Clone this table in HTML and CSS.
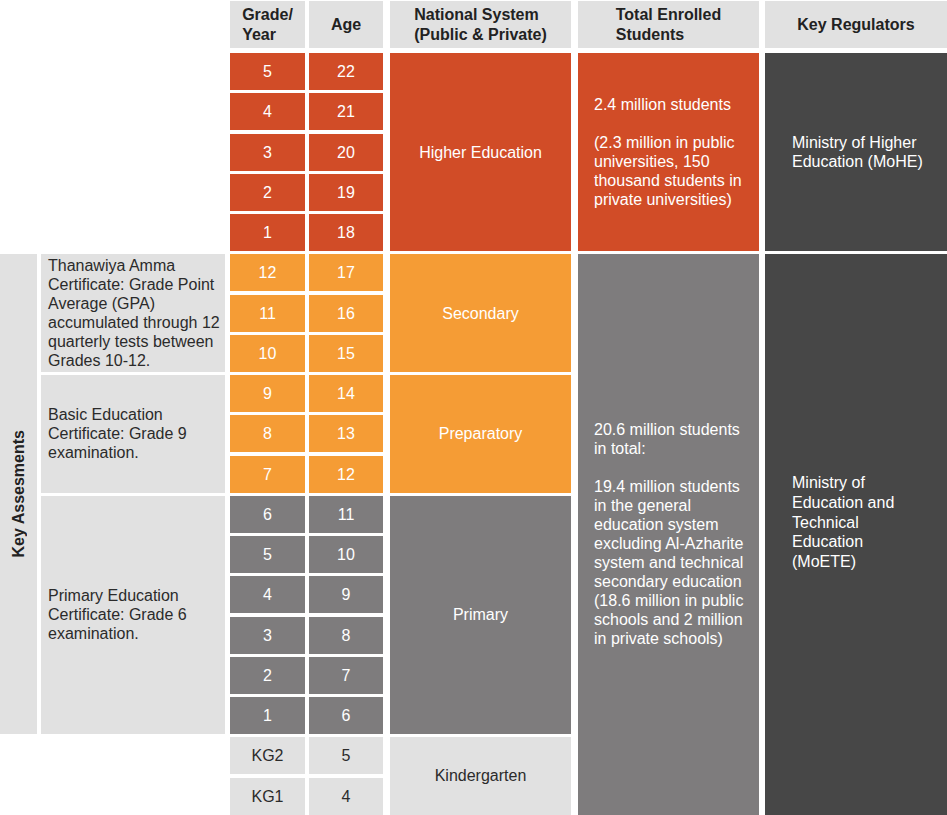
FILE: index.html
```html
<!DOCTYPE html>
<html lang="en">
<head>
<meta charset="utf-8">
<title>Education System</title>
<link rel="stylesheet" href="styles.css">
</head>
<body>
<div class="chart">
  <div class="hd c-grade"><span>Grade/<br>Year</span></div>
  <div class="hd c-age"><span>Age</span></div>
  <div class="hd c-nat"><span>National System<br>(Public &amp; Private)</span></div>
  <div class="hd c-total"><span>Total Enrolled<br>Students</span></div>
  <div class="hd c-key"><span>Key Regulators</span></div>

  <div class="strip"><span>Key Assesments</span></div>
  <div class="assess r-sec">Thanawiya Amma Certificate: Grade Point Average (GPA) accumulated through 12 quarterly tests between Grades 10-12.</div>
  <div class="assess r-prep">Basic Education Certificate: Grade 9 examination.</div>
  <div class="assess r-prim">Primary Education Certificate: Grade 6 examination.</div>

  <div class="nat red r-high">Higher Education</div>
  <div class="nat orange r-sec">Secondary</div>
  <div class="nat orange r-prep">Preparatory</div>
  <div class="nat gray r-prim">Primary</div>
  <div class="nat light r-kg">Kindergarten</div>

  <div class="total red r-high">
    <p>2.4 million students</p>
    <p>(2.3 million in public universities, 150 thousand students in private universities)</p>
  </div>
  <div class="total gray r-school">
    <p>20.6 million students in total:</p>
    <p>19.4 million students in the general education system excluding Al-Azharite system and technical secondary education (18.6 million in public schools and 2 million in private schools)</p>
  </div>

  <div class="key dark r-high"><p>Ministry of Higher Education (MoHE)</p></div>
  <div class="key dark key-school r-school"><p>Ministry of Education and Technical Education (MoETE)</p></div>

  <div class="num g red">5</div><div class="num a red">22</div>
  <div class="num g red">4</div><div class="num a red">21</div>
  <div class="num g red">3</div><div class="num a red">20</div>
  <div class="num g red">2</div><div class="num a red">19</div>
  <div class="num g red">1</div><div class="num a red">18</div>
  <div class="num g orange">12</div><div class="num a orange">17</div>
  <div class="num g orange">11</div><div class="num a orange">16</div>
  <div class="num g orange">10</div><div class="num a orange">15</div>
  <div class="num g orange">9</div><div class="num a orange">14</div>
  <div class="num g orange">8</div><div class="num a orange">13</div>
  <div class="num g orange">7</div><div class="num a orange">12</div>
  <div class="num g gray">6</div><div class="num a gray">11</div>
  <div class="num g gray">5</div><div class="num a gray">10</div>
  <div class="num g gray">4</div><div class="num a gray">9</div>
  <div class="num g gray">3</div><div class="num a gray">8</div>
  <div class="num g gray">2</div><div class="num a gray">7</div>
  <div class="num g gray">1</div><div class="num a gray">6</div>
  <div class="num g light">KG2</div><div class="num a light">5</div>
  <div class="num g light">KG1</div><div class="num a light">4</div>
</div>
</body>
</html>
```
FILE: styles.css
```css
html, body {
  margin: 0;
  padding: 0;
  height: 815px;
  overflow: hidden;
  background: #ffffff;
}

.chart {
  display: grid;
  grid-template-columns: 37px 4px 184px 5px 75px 4px 74px 7px 181px 7px 181px 6px 182px;
  grid-template-rows: 48.75px repeat(19, 37px);
  row-gap: 3.25px;
  padding-top: 1px;
  font-family: "Liberation Sans", Arial, Helvetica, sans-serif;
  font-size: 16px;
  line-height: 19px;
  color: #2b2b2b;
}

.c-grade, .g { grid-column: 5; }
.c-age, .a { grid-column: 7; }
.c-nat, .nat { grid-column: 9; }
.c-total, .total { grid-column: 11; }
.c-key, .key { grid-column: 13; }

.r-high { grid-row: 2 / 7; }
.r-sec { grid-row: 7 / 10; }
.r-prep { grid-row: 10 / 13; }
.r-prim { grid-row: 13 / 19; }
.r-kg { grid-row: 19 / 21; }
.r-school { grid-row: 7 / 21; }

.red { background: #d14c27; color: #ffffff; }
.orange { background: #f59c35; color: #ffffff; }
.gray { background: #7e7c7d; color: #ffffff; }
.dark { background: #474747; color: #ffffff; }
.light { background: #e1e1e1; color: #2b2b2b; }

.hd {
  grid-row: 1;
  height: 47px;
  background: #e1e1e1;
  display: flex;
  align-items: center;
  justify-content: center;
  font-weight: bold;
  line-height: 20px;
  color: #222222;
}

.hd span {
  text-align: left;
}

.strip {
  grid-column: 1;
  grid-row: 7 / 19;
  background: #e1e1e1;
  display: flex;
  align-items: center;
  justify-content: center;
}

.strip span {
  writing-mode: vertical-rl;
  transform: rotate(180deg);
  font-weight: bold;
  color: #222222;
}

.assess {
  grid-column: 3;
  background: #e1e1e1;
  display: flex;
  align-items: center;
  padding: 0 3px 0 7px;
}

.nat {
  display: flex;
  align-items: center;
  justify-content: center;
}

.num {
  display: flex;
  align-items: center;
  justify-content: center;
}

.total {
  display: flex;
  flex-direction: column;
  justify-content: center;
  padding: 0 10px 0 16px;
}

.total p, .key p {
  margin: 0;
}

.total p + p {
  margin-top: 19px;
}

.key {
  display: flex;
  flex-direction: column;
  justify-content: center;
  padding: 0 20px 0 27px;
}

.key-school {
  line-height: 19.75px;
  padding-bottom: 24px;
}
```
